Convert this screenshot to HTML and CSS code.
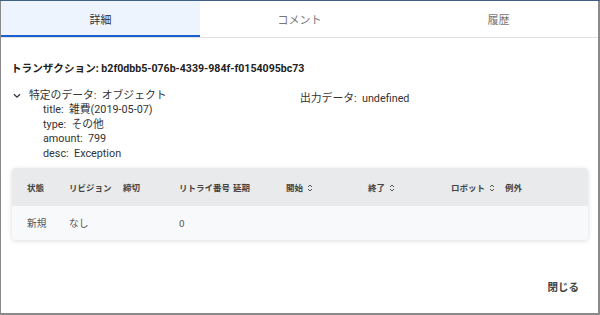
FILE: index.html
```html
<!DOCTYPE html>
<html lang="ja">
<head>
  <meta charset="UTF-8" />
  <title>トランザクション詳細</title>
  <link rel="stylesheet" href="styles.css">
</head>
<body>
  <div class="dialog">
    <div class="tabs">
      <div class="tab active">詳細</div>
      <div class="tab">コメント</div>
      <div class="tab">履歴</div>
    </div>

    <div class="content">
      <div class="txn">トランザクション: b2f0dbb5-076b-4339-984f-f0154095bc73</div>

      <div class="data-row">
        <div class="data-col">
          <div class="tree-head">
            <svg class="chev" width="8" height="6" viewBox="0 0 8 6"><path d="M1 1.2 L4 4.2 L7 1.2" fill="none" stroke="#333" stroke-width="1.3"/></svg>
            <span>特定のデータ:&nbsp; オブジェクト</span>
          </div>
          <div class="tree-body">
            <div>title:&nbsp; 雑費(2019-05-07)</div>
            <div>type:&nbsp; その他</div>
            <div>amount:&nbsp; 799</div>
            <div>desc:&nbsp; Exception</div>
          </div>
        </div>
        <div class="data-col">出力データ:&nbsp; undefined</div>
      </div>

      <div class="table-card">
        <div class="trow thead">
          <div>状態</div>
          <div>リビジョン</div>
          <div>締切</div>
          <div>リトライ番号</div>
          <div>延期</div>
          <div>開始 <svg class="sort" width="6" height="8" viewBox="0 0 6 8"><path d="M1 3 L3 1 L5 3 M1 5 L3 7 L5 5" fill="none" stroke="#555" stroke-width="1"/></svg></div>
          <div>終了 <svg class="sort" width="6" height="8" viewBox="0 0 6 8"><path d="M1 3 L3 1 L5 3 M1 5 L3 7 L5 5" fill="none" stroke="#555" stroke-width="1"/></svg></div>
          <div>ロボット <svg class="sort" width="6" height="8" viewBox="0 0 6 8"><path d="M1 3 L3 1 L5 3 M1 5 L3 7 L5 5" fill="none" stroke="#555" stroke-width="1"/></svg></div>
          <div>例外</div>
        </div>
        <div class="trow tbody">
          <div>新規</div>
          <div>なし</div>
          <div></div>
          <div>0</div>
          <div></div>
          <div></div>
          <div></div>
          <div></div>
          <div></div>
        </div>
      </div>
    </div>

    <div class="actions">
      <button class="close-btn">閉じる</button>
    </div>
  </div>
</body>
</html>
```

FILE: styles.css
```css
html, body {
  margin: 0;
  padding: 0;
}

body {
  width: 600px;
  height: 315px;
  background: #8a8a8a;
  border-top: 1px solid #3f5f86;
  box-sizing: border-box;
  font-family: Roboto, "Noto Sans CJK JP", sans-serif;
  color: #333;
  overflow: hidden;
}

.dialog {
  margin: 0 2px 0 1px;
  height: 312px;
  background: #fff;
  display: flex;
  flex-direction: column;
}

.tabs {
  display: flex;
  height: 36px;
  border-bottom: 1px solid #e2e2e2;
}

.tab {
  flex: 1;
  display: flex;
  align-items: center;
  justify-content: center;
  font-size: 11px;
  color: #777;
}

.tab.active {
  background: #edf4fd;
  color: #333;
  box-shadow: inset 0 -2px 0 #1b5fd0;
}

.content {
  padding: 0 9px 0 10px;
  flex: 1;
}

.txn {
  margin-top: 22px;
  font-size: 10.6px;
  font-weight: bold;
  color: #222;
}

.data-row {
  display: flex;
  margin-top: 14px;
}

.data-col {
  width: 289px;
  font-size: 10.8px;
  color: #333;
}

.tree-head {
  display: flex;
  align-items: center;
  line-height: 14px;
}

.chev {
  margin: 0 8px 0 2px;
}

.tree-body {
  padding-left: 32px;
  line-height: 14.5px;
}

.table-card {
  margin: 7px 1px 0 1px;
  border-radius: 4px;
  box-shadow: 0 1px 5px rgba(0, 0, 0, 0.14);
  overflow: hidden;
}

.trow {
  display: grid;
  grid-template-columns: 42px 54px 56px 54px 53px 82px 83px 54px 1fr;
  padding-left: 15px;
  align-items: center;
  white-space: nowrap;
}

.thead {
  height: 38px;
  background: #e9eaeb;
  font-size: 8.5px;
  font-weight: bold;
  color: #444;
}

.tbody {
  height: 34px;
  background: #f8f9fb;
  font-size: 9.8px;
  color: #555;
}

.sort {
  margin-left: 2px;
  vertical-align: -1px;
}

.actions {
  display: flex;
  justify-content: flex-end;
  padding: 0 19px 15px 0;
}

.close-btn {
  border: none;
  background: none;
  font-family: inherit;
  font-size: 10.5px;
  font-weight: bold;
  color: #444;
  padding: 4px 0;
}
```
